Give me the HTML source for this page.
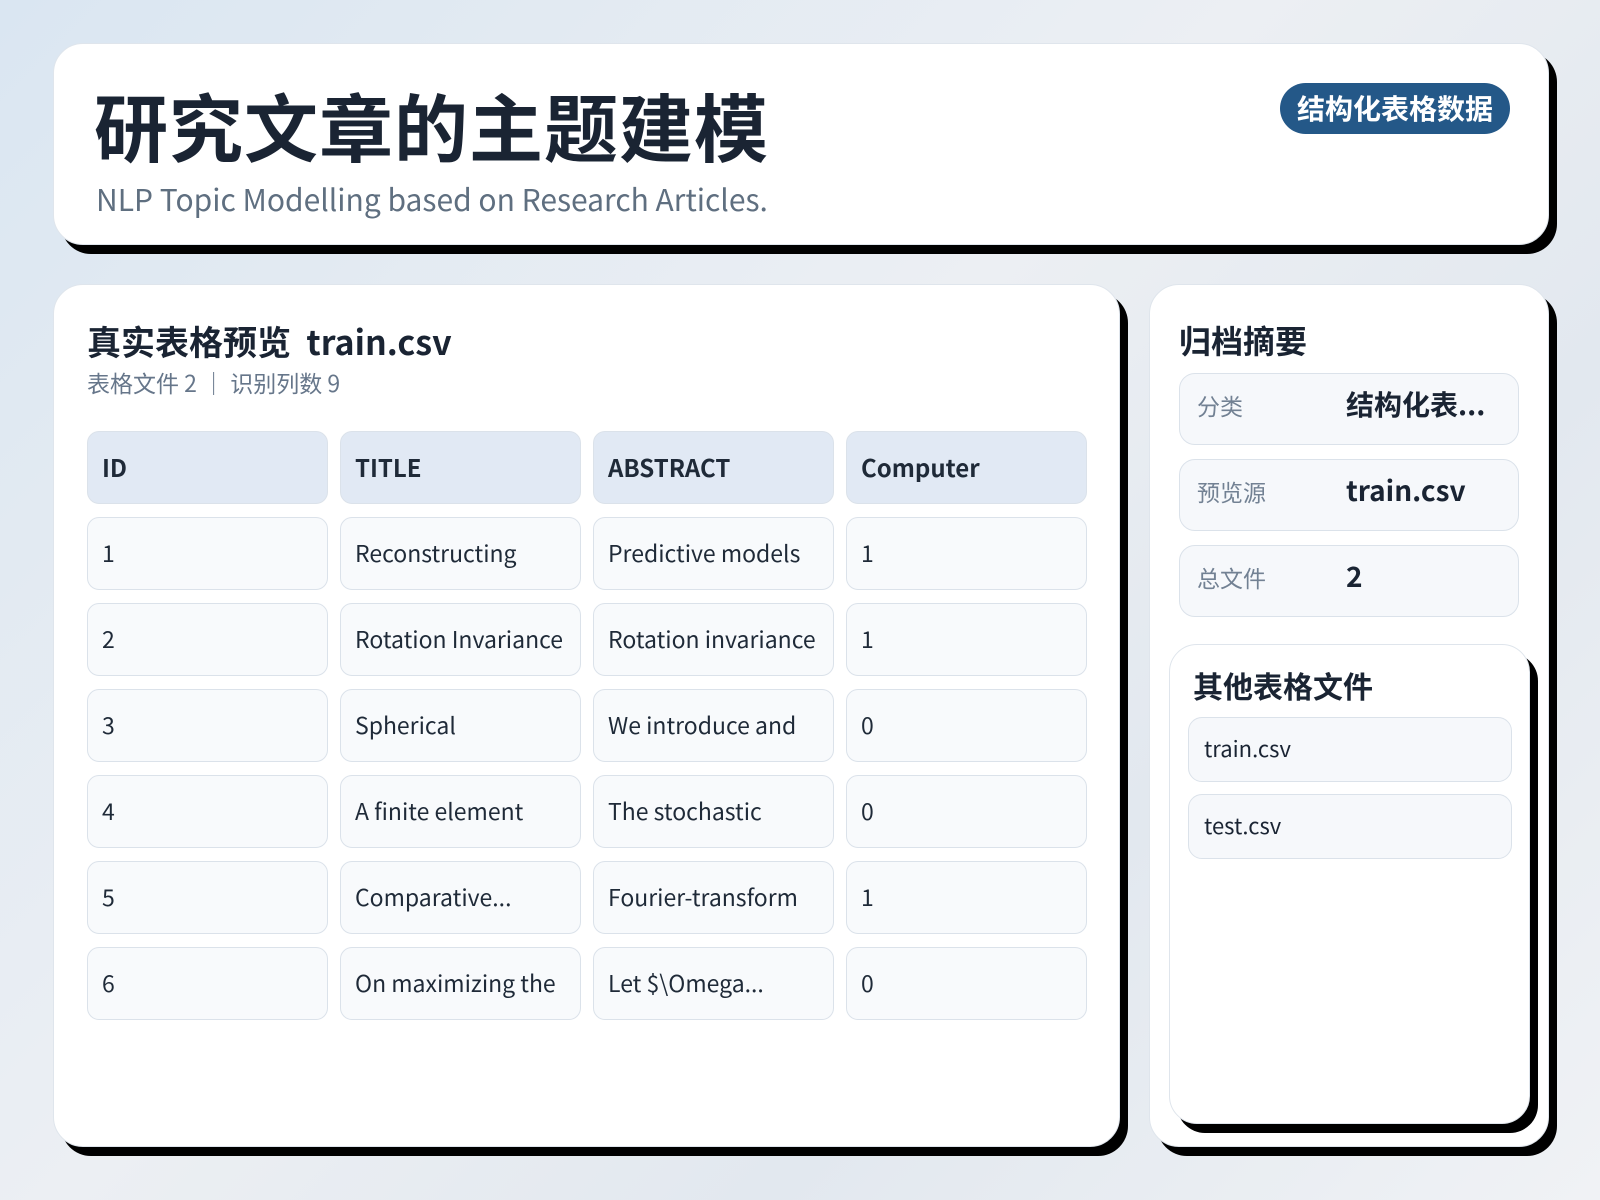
<!DOCTYPE html>
<html><head><meta charset="utf-8"><style>
*{box-sizing:border-box;margin:0;padding:0}
body{width:1600px;height:1200px;overflow:hidden;background:linear-gradient(135deg,#dae6f2 0%,#eceff3 45%,#e2e8ef 70%,#f0f2f5 100%);font-family:"Noto Sans CJK SC","Liberation Sans",sans-serif;color:#1a2433;position:relative}
.card{position:absolute;background:#fff;border-radius:30px;border:1px solid #dfe5ec;box-shadow:8px 9px 0 #000}
.h{left:53px;top:43px;width:1496px;height:202px}
.title{position:absolute;left:40px;top:44px;font-size:74px;font-weight:700;letter-spacing:1px;line-height:1}
.sub{position:absolute;left:42px;top:134px;font-size:30px;line-height:40px;color:#5f6f80}
.badge{position:absolute;left:1226px;top:39px;width:230px;height:51px;border-radius:26px;background:#245888;color:#fff;font-size:28px;font-weight:700;text-align:center;line-height:51px}
.l{left:53px;top:284px;width:1067px;height:863px}
.r{left:1149px;top:284px;width:400px;height:863px}
.ct{position:absolute;left:33px;top:34px;font-size:34px;line-height:44px;font-weight:700}
.cs{position:absolute;left:33px;top:82px;font-size:23px;line-height:30px;color:#66768a}
.cell{position:absolute;width:241px;height:73px;border:1px solid #dbe2ea;border-radius:12px;background:#f8fafc;font-size:23px;line-height:69px;padding-left:14px;color:#1f2a38}
.hd{background:#e1e9f4;font-weight:700;font-size:24px}
.it{position:absolute;left:29px;width:340px;height:72px;border:1px solid #dbe2ea;border-radius:16px;background:#f6f8fb}
.it .k{position:absolute;left:17px;top:16px;font-size:23px;line-height:30px;color:#728193}
.it .v{position:absolute;left:166px;top:12px;font-size:28px;line-height:36px;font-weight:700}
.in{left:19px;top:359px;width:361px;height:480px;border-radius:28px}
.f{position:absolute;left:18px;width:324px;height:65px;border:1px solid #dbe2ea;border-radius:14px;background:#f6f8fb;font-size:22px;line-height:61px;padding-left:15px}
</style></head><body>
<div class="card h">
<div class="title">研究文章的主题建模</div>
<div class="sub">NLP Topic Modelling based on Research Articles.</div>
<div class="badge">结构化表格数据</div>
</div>
<div class="card l">
<div class="ct">真实表格预览&nbsp;&nbsp;train.csv</div>
<div class="cs">表格文件 2 ｜ 识别列数 9</div>
<div style="position:absolute;left:33px;top:146px">
<div class="cell hd" style="left:0;top:0">ID</div><div class="cell hd" style="left:253px;top:0">TITLE</div><div class="cell hd" style="left:506px;top:0">ABSTRACT</div><div class="cell hd" style="left:759px;top:0">Computer</div>
<div class="cell" style="left:0;top:86px">1</div><div class="cell" style="left:253px;top:86px">Reconstructing</div><div class="cell" style="left:506px;top:86px">Predictive models</div><div class="cell" style="left:759px;top:86px">1</div>
<div class="cell" style="left:0;top:172px">2</div><div class="cell" style="left:253px;top:172px">Rotation Invariance</div><div class="cell" style="left:506px;top:172px">Rotation invariance</div><div class="cell" style="left:759px;top:172px">1</div>
<div class="cell" style="left:0;top:258px">3</div><div class="cell" style="left:253px;top:258px">Spherical</div><div class="cell" style="left:506px;top:258px">We introduce and</div><div class="cell" style="left:759px;top:258px">0</div>
<div class="cell" style="left:0;top:344px">4</div><div class="cell" style="left:253px;top:344px">A finite element</div><div class="cell" style="left:506px;top:344px">The stochastic</div><div class="cell" style="left:759px;top:344px">0</div>
<div class="cell" style="left:0;top:430px">5</div><div class="cell" style="left:253px;top:430px">Comparative...</div><div class="cell" style="left:506px;top:430px">Fourier-transform</div><div class="cell" style="left:759px;top:430px">1</div>
<div class="cell" style="left:0;top:516px">6</div><div class="cell" style="left:253px;top:516px">On maximizing the</div><div class="cell" style="left:506px;top:516px">Let $\Omega...</div><div class="cell" style="left:759px;top:516px">0</div>
</div>
</div>
<div class="card r">
<div class="ct" style="left:29px;top:33px;font-size:32px">归档摘要</div>
<div class="it" style="top:88px"><span class="k">分类</span><span class="v">结构化表...</span></div>
<div class="it" style="top:174px"><span class="k">预览源</span><span class="v">train.csv</span></div>
<div class="it" style="top:260px"><span class="k">总文件</span><span class="v">2</span></div>
<div class="card in">
<div class="ct" style="left:23px;top:18px;font-size:30px">其他表格文件</div>
<div class="f" style="top:72px">train.csv</div>
<div class="f" style="top:149px">test.csv</div>
</div>
</div>
</body></html>
